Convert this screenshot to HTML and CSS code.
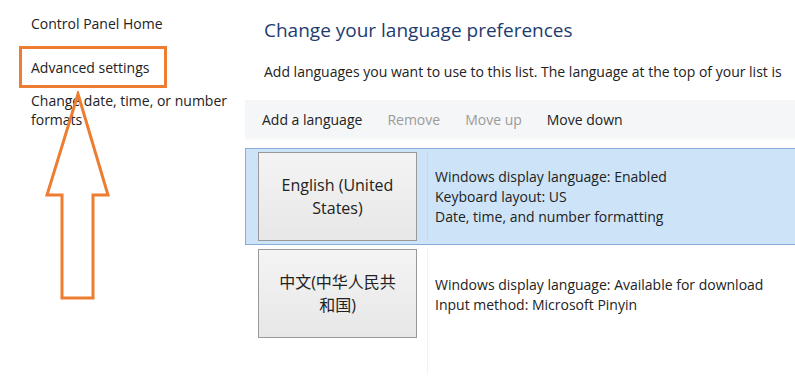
FILE: index.html
```html
<!DOCTYPE html>
<html lang="en">
<head>
  <meta charset="UTF-8">
  <title>Language</title>
  <link rel="stylesheet" href="styles.css">
</head>
<body>
  <div class="window">
    <!-- left task links -->
    <div class="sidebar">
      <a class="task">Control Panel Home</a>
      <a class="task highlight">Advanced settings</a>
      <a class="task">Change date, time, or number formats</a>

      <!-- annotation arrow -->
      <svg class="arrow" width="70" height="215" viewBox="0 0 70 215">
        <polygon points="33,3 63,104 48,104 48,207 17,207 17,104 2,104" fill="none" stroke="#ed7d31" stroke-width="3" stroke-linejoin="miter"/>
      </svg>
    </div>

    <div class="main">
      <h1>Change your language preferences</h1>
      <p class="intro">Add languages you want to use to this list. The language at the top of your list is</p>

      <div class="toolbar">
        <span class="tool">Add a language</span>
        <span class="tool disabled">Remove</span>
        <span class="tool disabled">Move up</span>
        <span class="tool">Move down</span>
      </div>

      <div class="lang-list">
        <div class="lang selected">
          <div class="lang-btn">English (United States)</div>
          <div class="lang-info">
            Windows display language: Enabled<br>
            Keyboard layout: US<br>
            Date, time, and number formatting
          </div>
        </div>
        <div class="lang last">
          <div class="lang-btn cjk">中文(中华人民共和国)</div>
          <div class="lang-info">
            Windows display language: Available for download<br>
            Input method: Microsoft Pinyin
          </div>
        </div>
      </div>
    </div>
  </div>
</body>
</html>
```

FILE: styles.css
```css
/* page */
body {
  margin: 0;
  background: #fff;
  font-family: "Open Sans", "Noto Sans CJK SC", sans-serif;
  color: #222;
  overflow: hidden;
}
.window {
  display: flex;
  width: 795px;
  height: 377px;
  overflow: hidden;
}

/* left links */
.sidebar {
  position: relative;
  flex: 0 0 245px;
  padding: 14px 0 0 19px;
  box-sizing: border-box;
}
.task {
  display: block;
  padding-left: 12px;
  font-size: 14px;
  line-height: 19px;
  color: #222;
  width: 225px;
  box-sizing: border-box;
}
.task.highlight {
  width: 148px;
  height: 42px;
  margin: 13px 0 3px;
  padding: 9px 0 0 9px;
  border: 3px solid #ed7d31;
}
.arrow {
  position: absolute;
  left: 45px;
  top: 91px;
}

/* right content */
.main {
  flex: 1;
  min-width: 0;
}
.main h1 {
  margin: 16px 0 0 19px;
  font-size: 19px;
  font-weight: normal;
  line-height: 28px;
  color: #1e3b70;
}
.intro {
  margin: 18px 0 0 19px;
  font-size: 14px;
  line-height: 20px;
  white-space: nowrap;
}

/* command bar */
.toolbar {
  display: flex;
  gap: 25px;
  align-items: center;
  height: 38px;
  margin-top: 18px;
  padding-left: 17px;
  background: #f5f6f7;
  border-bottom: 3px solid #fafbfb;
  font-size: 14px;
}
.tool.disabled {
  color: #9b9b9b;
}

/* language rows */
.lang-list {
  margin-top: 7px;
}
.lang {
  display: flex;
  align-items: stretch;
  border: 1px solid transparent;
  border-right: 0;
  padding: 3px 0 0 12px;
}
.lang.selected {
  background: #cde4f8;
  border-color: #86aed8;
  padding-bottom: 3px;
}
.lang.last {
  height: 130px;
  box-sizing: border-box;
}
.lang-btn {
  flex: 0 0 159px;
  height: 89px;
  box-sizing: border-box;
  display: flex;
  align-items: center;
  justify-content: center;
  padding: 0 14px;
  text-align: center;
  font-size: 16px;
  line-height: 23px;
  background: linear-gradient(#f4f4f4, #e7e7e7);
  border: 1px solid #999;
}
.lang-info {
  margin-left: 10px;
  padding: 0 0 0 7px;
  border-left: 1px solid rgba(0, 0, 0, 0.05);
  font-size: 14px;
  line-height: 20px;
  display: flex;
  align-items: center;
  height: 89px;
  white-space: nowrap;
}
.lang.last .lang-info {
  height: auto;
  align-items: flex-start;
  padding-top: 26px;
}
```
